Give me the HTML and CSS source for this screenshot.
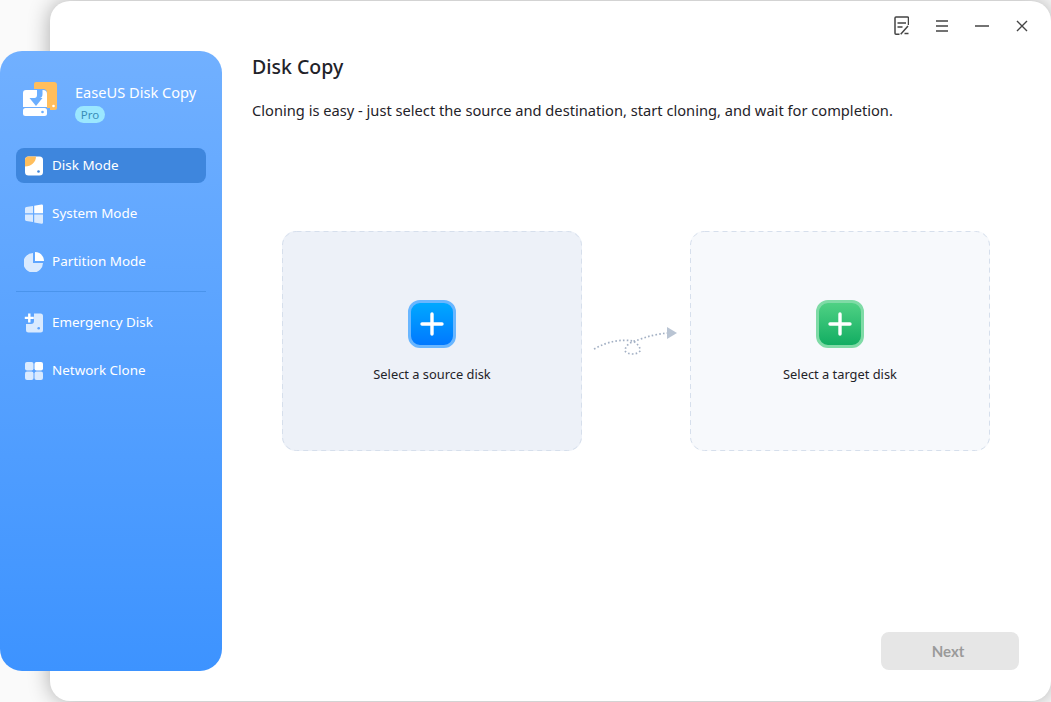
FILE: index.html
```html
<!DOCTYPE html>
<html lang="en">
<head>
  <meta charset="UTF-8">
  <meta name="viewport" content="width=device-width, initial-scale=1.0">
  <title>EaseUS Disk Copy</title>
  <link rel="stylesheet" href="styles.css">
</head>
<body>

  <div class="app">
    <!-- Left navigation -->
    <aside class="sidebar">
      <div class="brand">
        <svg class="brand-logo" width="36" height="36" viewBox="0 0 36 36">
          <path d="M14 1h18a3 3 0 0 1 3 3v20a3 3 0 0 1-3 3h-7V12a4 4 0 0 0-4-4h-9V3a2 2 0 0 1 2-2z" fill="#ffbe5c"/>
          <path d="M28 21h6a1 1 0 0 1 1 1v5a2 2 0 0 1-2 2h-5z" fill="#ffbe5c"/>
          <circle cx="31.500" cy="25" r="1.300" fill="#fff"/>
          <path d="M4 9h17a4 4 0 0 1 4 4v13H1V12a3 3 0 0 1 3-3z" fill="#fff"/>
          <rect x="1" y="27" width="24" height="8" rx="2.500" fill="#fff"/>
          <circle cx="20.500" cy="31" r="1.300" fill="#6aaeff"/>
          <path d="M15 9h5.500v4c0 2.500-1 4-3 4h3l-6.500 8-6.500-8h5c1.500 0 2.500-1 2.500-3z" fill="#6aaeff"/>
        </svg>
        <div class="brand-text">
          <div class="brand-name">EaseUS Disk Copy</div>
          <span class="badge">Pro</span>
        </div>
      </div>

      <nav class="nav">
        <a class="nav-item active">
          <svg class="nav-icon" width="20" height="20" viewBox="0 0 20 20">
            <rect x="1" y="0.500" width="18" height="19" rx="3.500" fill="#fff"/>
            <path d="M4.500 0.500H12C12 6 7.500 10.500 1 10.500V4a3.500 3.500 0 0 1 3.500-3.500z" fill="#ffbe5c"/>
            <circle cx="14.500" cy="15.500" r="1.300" fill="#3d85dc"/>
          </svg>
          <span>Disk Mode</span>
        </a>
        <a class="nav-item">
          <svg class="nav-icon" width="20" height="20" viewBox="0 0 20 20">
            <path d="M1 4.500a1.500 1.500 0 0 1 1.300-1.500L9 2v7.200H1z" fill="#d9eaff"/>
            <path d="M10.200 1.800l7.300-1.300A1.300 1.300 0 0 1 19 1.800v7.400h-8.800z" fill="#fff"/>
            <path d="M1 10.500h8V18l-6.700-1A1.500 1.500 0 0 1 1 15.500z" fill="#d9eaff"/>
            <path d="M10.200 10.500H19v8a1.300 1.300 0 0 1-1.500 1.300l-7.300-1.300z" fill="#d9eaff"/>
          </svg>
          <span>System Mode</span>
        </a>
        <a class="nav-item last-group">
          <svg class="nav-icon" width="20" height="20" viewBox="0 0 20 20">
            <path d="M9 1v10h10a9.800 9.800 0 1 1-10-10z" fill="#d9eaff"/>
            <path d="M11 0c5 0 9 4 9 9h-9z" fill="#fff"/>
          </svg>
          <span>Partition Mode</span>
        </a>
        <div class="nav-divider"></div>
        <a class="nav-item">
          <svg class="nav-icon" width="20" height="20" viewBox="0 0 20 20">
            <path d="M3 0.500h13.500A2.500 2.500 0 0 1 19 3v14a2.500 2.500 0 0 1-2.500 2.500h-12A2.500 2.500 0 0 1 2 17V11h5a3 3 0 0 0 3-3V0.500z" fill="#d9eaff"/>
            <path d="M6.500 0.500v3.200h3.300v2.400H6.500v3.300H4.100V6.100H0.800V3.700h3.300V0.500z" fill="#fff"/>
            <circle cx="14.700" cy="15.200" r="1.300" fill="#5ba3ff"/>
          </svg>
          <span>Emergency Disk</span>
        </a>
        <a class="nav-item">
          <svg class="nav-icon" width="20" height="20" viewBox="0 0 20 20">
            <rect x="1" y="1" width="8.500" height="8.500" rx="2" fill="#d9eaff"/>
            <rect x="10.500" y="1" width="8.500" height="8.500" rx="2" fill="#fff"/>
            <rect x="1" y="10.500" width="8.500" height="8.500" rx="2" fill="#d9eaff"/>
            <rect x="10.500" y="10.500" width="8.500" height="8.500" rx="2" fill="#d9eaff"/>
          </svg>
          <span>Network Clone</span>
        </a>
      </nav>
    </aside>

    <!-- Main window -->
    <main class="window">
      <div class="titlebar">
        <svg width="20" height="20" viewBox="0 0 20 20" fill="none" stroke="#444" stroke-width="1.500">
          <path d="M10.500 18.300H7a1 1 0 0 1-1-1V2a1 1 0 0 1 1-1h11.500a1 1 0 0 1 1 1v7"/>
          <path d="M8.500 7h8.500M8.500 11h5"/>
          <path d="M11.700 18.300L19 10M15.500 17.500h4"/>
        </svg>
        <svg width="14" height="14" viewBox="0 0 14 14" stroke="#444" stroke-width="1.500">
          <path d="M1 2h12M1 7h12M1 12h12"/>
        </svg>
        <svg width="14" height="14" viewBox="0 0 14 14" stroke="#444" stroke-width="1.500">
          <path d="M0 7h14"/>
        </svg>
        <svg width="14" height="14" viewBox="0 0 14 14" stroke="#444" stroke-width="1.400">
          <path d="M2 2l10 10M12 2L2 12"/>
        </svg>
      </div>

      <div class="content">
        <h1>Disk Copy</h1>
        <p class="intro">Cloning is easy - just select the source and destination, start cloning, and wait for completion.</p>

        <div class="disks">
          <div class="disk-card source">
            <svg class="card-outline" width="300" height="220" viewBox="0 0 300 220"><rect x="0.500" y="0.500" width="299" height="219" rx="14"/></svg>
            <div class="plus plus-blue">
              <svg width="24" height="24" viewBox="0 0 24 24"><path d="M12 2v20M2 12h20" stroke="#fff" stroke-width="3.400" stroke-linecap="round"/></svg>
            </div>
            <div class="disk-label">Select a source disk</div>
          </div>

          <svg class="arrow" width="108" height="50" viewBox="0 0 108 50" fill="none">
            <path d="M12 33C26 25 40 23 51 25C55 27 59 32 58 35C55 39 46 39 43 35C43 29 50 25 56 24C66 20 76 18 85 17" stroke="#a3b0c4" stroke-width="1.700" stroke-dasharray="1.600 2.200"/>
            <path d="M85 11l10 6-10 6z" fill="#b9c4d3"/>
          </svg>

          <div class="disk-card target">
            <svg class="card-outline" width="300" height="220" viewBox="0 0 300 220"><rect x="0.500" y="0.500" width="299" height="219" rx="14"/></svg>
            <div class="plus plus-green">
              <svg width="24" height="24" viewBox="0 0 24 24"><path d="M12 2v20M2 12h20" stroke="#fff" stroke-width="3.400" stroke-linecap="round"/></svg>
            </div>
            <div class="disk-label">Select a target disk</div>
          </div>
        </div>
      </div>

      <div class="footer">
        <button class="next-btn" disabled>Next</button>
      </div>
    </main>
  </div>

</body>
</html>
```

FILE: styles.css
```css
html, body {
  margin: 0;
  padding: 0;
  height: 100%;
  overflow: hidden;
}

body {
  font-family: 'Noto Sans', 'Liberation Sans', sans-serif;
  background-color: #fafafa;
  color: #1f2329;
}

.app {
  display: flex;
  height: 702px;
  width: 1051px;
  overflow: hidden;
}

/* sidebar sits on top of the window's left edge */
.sidebar {
  position: relative;
  z-index: 1;
  flex: none;
  width: 222px;
  height: 620px;
  margin-top: 51px;
  border-radius: 22px;
  background: linear-gradient(180deg, #71b0ff 0%, #3d93ff 100%);
  box-sizing: border-box;
  padding: 30px 16px 0;
}

.brand {
  display: flex;
  align-items: flex-start;
  height: 67px;
  padding-left: 6px;
}

.brand-logo {
  flex: none;
}

.brand-text {
  margin-left: 17px;
}

.brand-name {
  font-size: 14.600px;
  line-height: 23px;
  color: #fff;
}

.badge {
  display: block;
  width: 30px;
  height: 17px;
  margin-top: 2px;
  border-radius: 9px;
  background-color: #9be7ff;
  color: #3a8db8;
  font-size: 11.500px;
  line-height: 17px;
  text-align: center;
}

.nav-item {
  display: flex;
  align-items: center;
  height: 35px;
  margin-bottom: 13px;
  padding-left: 8px;
  border-radius: 8px;
  font-size: 13.450px;
  color: #fff;
}

.nav-item span {
  margin-bottom: 2px;
}

.nav-item.last-group {
  margin-bottom: 12px;
}

.nav-item.active {
  background-color: #3e86dd;
}

.nav-icon {
  flex: none;
  margin-right: 8px;
}

.nav-divider {
  height: 1px;
  margin: 0 0 13px;
  background-color: #4a94ec;
}

.window {
  flex: none;
  display: flex;
  flex-direction: column;
  width: 1001px;
  height: 700px;
  margin: 1px 0 1px -172px;
  border-radius: 20px;
  background-color: #fff;
  box-shadow: 0 0 22px rgba(0, 0, 0, 0.32);
  box-sizing: border-box;
  padding-left: 172px;
}

.titlebar {
  display: flex;
  justify-content: flex-end;
  align-items: center;
  gap: 26px;
  height: 50px;
  padding-right: 22px;
}

.content {
  padding-left: 30px;
}

h1 {
  margin: 0;
  font-size: 19.500px;
  font-weight: 500;
  line-height: 30px;
  margin-top: 1px;
}

.intro {
  margin: 14px 0 0;
  font-size: 14.660px;
  line-height: 28px;
}

.disks {
  display: flex;
  align-items: center;
  margin: 107px 0 0 30px;
}

.disk-card {
  position: relative;
  display: flex;
  flex-direction: column;
  align-items: center;
  width: 300px;
  height: 220px;
  box-sizing: border-box;
  padding-top: 69px;
  border-radius: 14px;
}

.card-outline {
  position: absolute;
  top: 0;
  left: 0;
  fill: none;
  stroke: #d6dfec;
  stroke-dasharray: 5 4;
}

.source {
  background-color: #edf1f8;
}

.target {
  background-color: #f7f9fc;
}

.plus {
  display: flex;
  justify-content: center;
  align-items: center;
  width: 48px;
  height: 48px;
  box-sizing: border-box;
  border-radius: 12px;
}

.plus-blue {
  border: 3px solid #69b6ff;
  background: linear-gradient(180deg, #00a8ff 0%, #0078ff 100%);
}

.plus-green {
  border: 3px solid #7fdba6;
  background: linear-gradient(180deg, #4fd184 0%, #12ad62 100%);
}

.disk-label {
  margin-top: 16px;
  font-size: 12.850px;
  line-height: 20px;
}

.arrow {
  flex: none;
}

.footer {
  margin-top: auto;
  display: flex;
  justify-content: flex-end;
  padding: 0 32px 31px 0;
}

.next-btn {
  width: 138px;
  height: 38px;
  padding: 0 4px 0 0;
  border: none;
  border-radius: 8px;
  background-color: #e6e6e6;
  color: #9a9a9a;
  font-family: 'Lato', 'Liberation Sans', sans-serif;
  font-size: 15px;
  font-weight: 700;
}
```
